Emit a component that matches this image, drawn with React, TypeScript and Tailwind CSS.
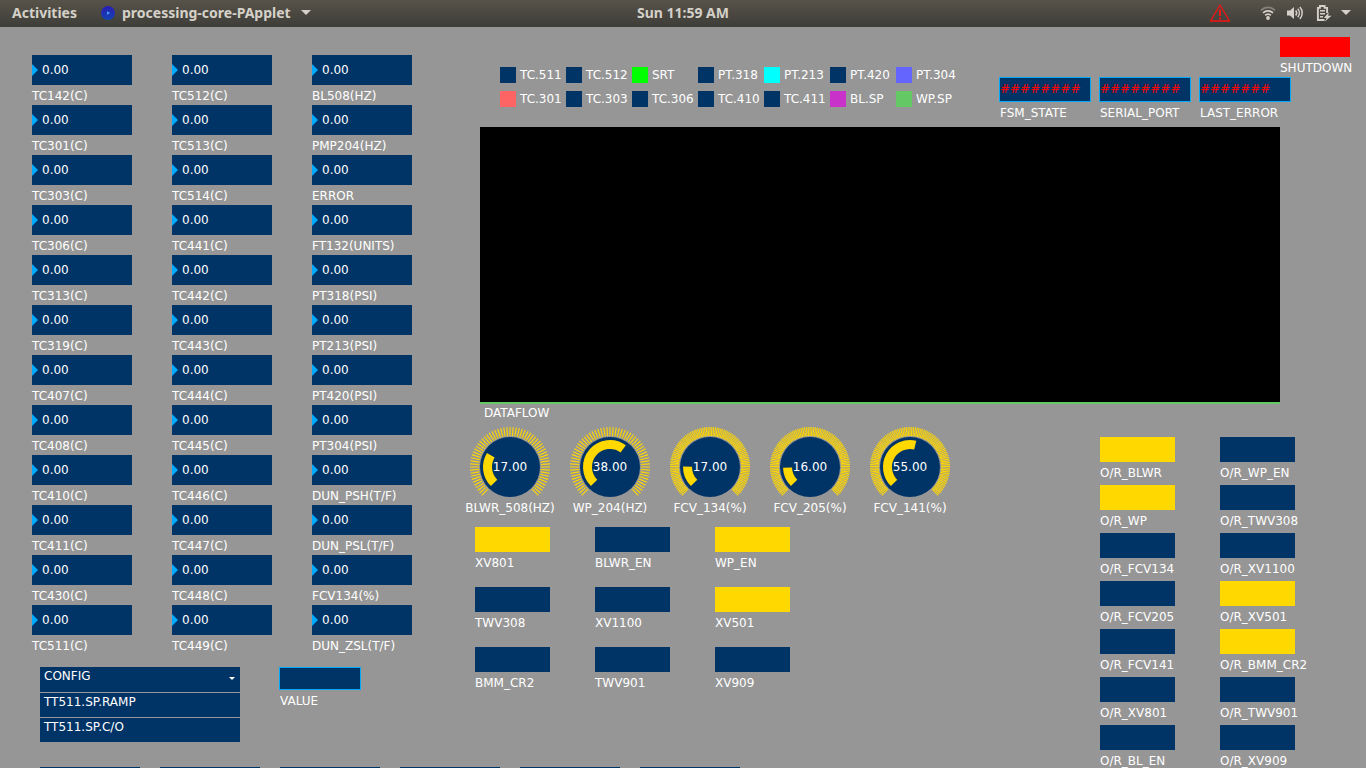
import React, { useId } from "react";

const sensorColumns: string[][] = [
  ["TC142(C)", "TC301(C)", "TC303(C)", "TC306(C)", "TC313(C)", "TC319(C)", "TC407(C)", "TC408(C)", "TC410(C)", "TC411(C)", "TC430(C)", "TC511(C)"],
  ["TC512(C)", "TC513(C)", "TC514(C)", "TC441(C)", "TC442(C)", "TC443(C)", "TC444(C)", "TC445(C)", "TC446(C)", "TC447(C)", "TC448(C)", "TC449(C)"],
  ["BL508(HZ)", "PMP204(HZ)", "ERROR", "FT132(UNITS)", "PT318(PSI)", "PT213(PSI)", "PT420(PSI)", "PT304(PSI)", "DUN_PSH(T/F)", "DUN_PSL(T/F)", "FCV134(%)", "DUN_ZSL(T/F)"],
];

const series: { name: string; color: string }[] = [
  { name: "TC.511", color: "bg-[#003366]" },
  { name: "TC.512", color: "bg-[#003366]" },
  { name: "SRT", color: "bg-[#00ff00]" },
  { name: "PT.318", color: "bg-[#003366]" },
  { name: "PT.213", color: "bg-[#00ffff]" },
  { name: "PT.420", color: "bg-[#003366]" },
  { name: "PT.304", color: "bg-[#6464ff]" },
  { name: "TC.301", color: "bg-[#ff6464]" },
  { name: "TC.303", color: "bg-[#003366]" },
  { name: "TC.306", color: "bg-[#003366]" },
  { name: "TC.410", color: "bg-[#003366]" },
  { name: "TC.411", color: "bg-[#003366]" },
  { name: "BL.SP", color: "bg-[#c832c8]" },
  { name: "WP.SP", color: "bg-[#64c864]" },
];

const statusFields = [
  { name: "FSM_STATE", value: "########" },
  { name: "SERIAL_PORT", value: "########" },
  { name: "LAST_ERROR", value: "#######" },
];

const knobs = [
  { name: "BLWR_508(HZ)", value: 17, max: 60 },
  { name: "WP_204(HZ)", value: 38, max: 60 },
  { name: "FCV_134(%)", value: 17, max: 100 },
  { name: "FCV_205(%)", value: 16, max: 100 },
  { name: "FCV_141(%)", value: 55, max: 100 },
];

type Switch = { name: string; on: boolean };

const outputs: Switch[] = [
  { name: "XV801", on: true },
  { name: "BLWR_EN", on: false },
  { name: "WP_EN", on: true },
  { name: "TWV308", on: false },
  { name: "XV1100", on: false },
  { name: "XV501", on: true },
  { name: "BMM_CR2", on: false },
  { name: "TWV901", on: false },
  { name: "XV909", on: false },
];

const overrides: Switch[] = [
  { name: "O/R_BLWR", on: true },
  { name: "O/R_WP_EN", on: false },
  { name: "O/R_WP", on: true },
  { name: "O/R_TWV308", on: false },
  { name: "O/R_FCV134", on: false },
  { name: "O/R_XV1100", on: false },
  { name: "O/R_FCV205", on: false },
  { name: "O/R_XV501", on: true },
  { name: "O/R_FCV141", on: false },
  { name: "O/R_BMM_CR2", on: true },
  { name: "O/R_XV801", on: false },
  { name: "O/R_TWV901", on: false },
  { name: "O/R_BL_EN", on: false },
  { name: "O/R_XV909", on: false },
];

function TopBar() {
  return (
    <header className="grid h-[27px] shrink-0 grid-cols-3 items-center bg-linear-to-b from-[#57534a] to-[#3e3d38] pb-0.5 font-['Noto_Sans',sans-serif] text-sm font-bold text-[#d5d1c8]">
      <div className="flex items-center pl-3">
        <button>Activities</button>
        <button className="ml-[23px] flex items-center">
          <svg className="mr-1.5" width="16" height="16" viewBox="0 0 16 16" aria-hidden="true">
            <defs>
              <linearGradient id="app-icon" x1="0" y1="0" x2="0" y2="1">
                <stop offset="0" stopColor="#2a1cb4" />
                <stop offset="1" stopColor="#1246b4" />
              </linearGradient>
            </defs>
            <circle cx="8" cy="8" r="7" fill="url(#app-icon)" />
            <path d="M7 6.2 10.2 8 7 9.8z" fill="#4aa0f0" />
          </svg>
          processing-core-PApplet
          <svg className="ml-2.5" width="10" height="5" viewBox="0 0 10 5" aria-hidden="true">
            <path d="M0 0h10L5 5z" fill="#d5d1c8" />
          </svg>
        </button>
      </div>
      <button className="justify-self-center">Sun 11:59 AM</button>
      <div className="flex items-center justify-end pr-[15px]">
        <button aria-label="Warning">
          <svg width="22" height="20" viewBox="0 0 22 20" fill="none" stroke="#f01414" aria-hidden="true">
            <path d="M11 2 1.5 18h19z" strokeWidth="1.3" strokeLinejoin="round" />
            <path d="M11 6.5v6.5" strokeWidth="2" />
            <path d="M11 14.5v2" strokeWidth="2" />
          </svg>
        </button>
        <button aria-label="Network" className="ml-[29px]">
          <svg width="16" height="16" viewBox="0 0 16 16" fill="none" strokeWidth="1.7" stroke="#d5d1c8" aria-hidden="true">
            <path d="M1 5.5a9.5 9.5 0 0 1 14 0" stroke="#85827a" />
            <path d="M3 8a6.8 6.8 0 0 1 10 0" />
            <path d="M5.2 10.4a3.8 3.8 0 0 1 5.6 0" />
            <circle cx="8" cy="13" r="1.9" fill="#d5d1c8" stroke="none" />
          </svg>
        </button>
        <button aria-label="Volume" className="ml-[11px]">
          <svg width="16" height="16" viewBox="0 0 16 16" fill="none" stroke="#d5d1c8" strokeWidth="1.5" aria-hidden="true">
            <path d="M0 5.5h3L7 2v12l-4-3.500H0z" fill="#d5d1c8" stroke="none" />
            <path d="M8.700 5.500a4 4 0 0 1 0 5" />
            <path d="M10.800 3.800a6.500 6.500 0 0 1 0 8.400" />
            <path d="M12.900 2a9 9 0 0 1 0 12" />
          </svg>
        </button>
        <button aria-label="Battery" className="ml-[13px]">
          <svg width="16" height="18" viewBox="0 0 16 18" fill="none" stroke="#d5d1c8" strokeWidth="1.900" aria-hidden="true">
            <path d="M8.500 16H1.900V3.900h2V2h4.700v1.900h2.500V9" />
            <path d="M4 6.800h5M4 9.800h5M4 12.800h3" strokeWidth="1.600" />
            <path d="m12.800 8.300-5 5.600h2.900L8.700 17.700l6.800-6h-3.300z" fill="#d5d1c8" stroke="none" />
          </svg>
        </button>
        <button aria-label="System menu" className="ml-[9px]">
          <svg width="10" height="5" viewBox="0 0 10 5" aria-hidden="true">
            <path d="M0 0h10L5 5z" fill="#d5d1c8" />
          </svg>
        </button>
      </div>
    </header>
  );
}

function NumberBox({ name }: { name: string }) {
  const id = useId();
  return (
    <div className="relative">
      <input id={id} defaultValue="0.00" className="block h-[30px] w-full bg-[#003366] pl-2.5 text-white outline-none" />
      <svg className="absolute left-0 top-[9px]" width="6" height="12" viewBox="0 0 6 12" aria-hidden="true">
        <path d="M0 0 6 6 0 12z" fill="#00aaff" />
      </svg>
      <label htmlFor={id} className="block h-5 leading-[22px]">{name}</label>
    </div>
  );
}

function Toggle({ name, on }: Switch) {
  const id = useId();
  return (
    <div>
      <button id={id} aria-pressed={on} className={on ? "block h-[25px] w-full bg-[#ffd800]" : "block h-[25px] w-full bg-[#003366]"} />
      <label htmlFor={id} className="block h-5 leading-[22px]">{name}</label>
    </div>
  );
}

function Knob({ name, value, max }: { name: string; value: number; max: number }) {
  const point = (radius: number, degrees: number) => {
    const a = (degrees * Math.PI) / 180;
    return `${(40 + radius * Math.cos(a)).toFixed(2)} ${(40 + radius * Math.sin(a)).toFixed(2)}`;
  };
  const sweep = (value / max) * 270;
  const ticks = Array.from({ length: max + 1 }, (_, i) => {
    const angle = 135 + (i * 270) / max;
    return `M${point(31, angle)}L${point(40, angle)}`;
  }).join("");
  return (
    <label className="relative flex w-[100px] flex-col items-center">
      <svg width="80" height="70" viewBox="0 0 80 70" aria-hidden="true">
        <path d={ticks} stroke="#ffd800" strokeWidth="1.1" />
        <circle cx="40" cy="40" r="30" fill="#003366" />
        <path
          d={`M${point(22.5, 135)}A22.5 22.5 0 ${sweep > 180 ? 1 : 0} 1 ${point(22.5, 135 + sweep)}`}
          fill="none"
          stroke="#ffd800"
          strokeWidth="9"
        />
        <text x="40" y="44" textAnchor="middle" fill="#fff" fontSize="12">{value.toFixed(2)}</text>
      </svg>
      <span className="h-5 leading-[22px]">{name}</span>
      <input type="range" min={0} max={max} defaultValue={value} className="absolute inset-0 size-full opacity-0" />
    </label>
  );
}

function ConfigMenu() {
  return (
    <div className="flex w-[200px] flex-col gap-px">
      <button aria-expanded="true" className="flex h-[25px] items-start justify-between bg-[#003366] pl-1 pr-[5px] text-left leading-[18px]">
        CONFIG
        <svg className="mt-2.5" width="6" height="3" viewBox="0 0 6 3" aria-hidden="true">
          <path d="M0 0h6L3 3z" fill="#fff" />
        </svg>
      </button>
      <button className="h-6 bg-[#003366] pb-1.5 pl-1 text-left leading-[18px]">TT511.SP.RAMP</button>
      <button className="h-6 bg-[#003366] pb-1.5 pl-1 text-left leading-[18px]">TT511.SP.C/O</button>
    </div>
  );
}

function SensorPanel() {
  return (
    <section className="w-[460px] shrink-0 pl-8 pt-7">
      <div className="flex gap-10">
        {sensorColumns.map((column) => (
          <div key={column[0]} className="w-[100px]">
            {column.map((name) => (
              <NumberBox key={name} name={name} />
            ))}
          </div>
        ))}
      </div>
      <div className="mt-3 flex items-start pl-2">
        <ConfigMenu />
        <div className="ml-[39px]">
          <input id="value" className="block h-[23px] w-[82px] border border-[#00aaff] bg-[#003366] px-0.5 outline-none" />
          <label htmlFor="value" className="block h-5 pl-px leading-[22px]">VALUE</label>
        </div>
      </div>
      <div className="mt-[25px] flex w-max gap-5 pl-2">
        {[1, 2, 3, 4, 5, 6].map((n) => (
          <button key={n} aria-label={`Command ${n}`} className="h-[25px] w-[100px] bg-[#003366]" />
        ))}
      </div>
    </section>
  );
}

function Legend() {
  return (
    <ul className="mt-[30px] grid grid-cols-[repeat(7,66px)] content-start gap-y-2 pl-10">
      {series.map((s) => (
        <li key={s.name} className="flex items-center gap-1 leading-4">
          <span className={`size-4 shrink-0 ${s.color}`} />
          {s.name}
        </li>
      ))}
    </ul>
  );
}

export default function App() {
  return (
    <div className="flex h-screen flex-col overflow-hidden bg-[#969696] font-['DejaVu_Sans',sans-serif] text-xs whitespace-nowrap text-white">
      <TopBar />
      <main className="flex min-h-0 flex-1">
        <SensorPanel />
        <div className="min-w-0 flex-1 pt-2.5">
          <div className="flex justify-between pr-4">
            <Legend />
            <div className="flex flex-col items-end">
              <div className="w-[70px]">
                <button id="shutdown" className="block h-5 w-full bg-[#ff0000]" />
                <label htmlFor="shutdown" className="block h-5 leading-[22px]">SHUTDOWN</label>
              </div>
              <div className="flex gap-2 pr-[59px]">
                {statusFields.map((f) => (
                  <div key={f.name} className="w-[92px]">
                    <input
                      id={f.name}
                      readOnly
                      value={f.value}
                      className="block h-[25px] w-full border border-[#00aaff] bg-[#003366] pb-0.5 text-[#ff0000] outline-none"
                    />
                    <label htmlFor={f.name} className="block h-5 pl-px leading-[22px]">{f.name}</label>
                  </div>
                ))}
              </div>
            </div>
          </div>
          <figure className="ml-5 mr-[86px] mt-[5px]">
            <div className="h-[277px] border-b-2 border-[#64c864] bg-black" />
            <figcaption className="pl-1 leading-[18px]">DATAFLOW</figcaption>
          </figure>
          <div className="flex justify-between pr-[71px]">
            <div className="pt-[5px]">
              <div className="flex">
                {knobs.map((k) => (
                  <Knob key={k.name} {...k} />
                ))}
              </div>
              <div className="mt-2.5 grid grid-cols-[repeat(3,75px)] gap-x-[45px] gap-y-[15px] pl-[15px]">
                {outputs.map((o) => (
                  <Toggle key={o.name} {...o} />
                ))}
              </div>
            </div>
            <div className="grid grid-cols-[repeat(2,75px)] content-start gap-x-[45px] gap-y-[3px] pt-[15px]">
              {overrides.map((o) => (
                <Toggle key={o.name} {...o} />
              ))}
            </div>
          </div>
        </div>
      </main>
    </div>
  );
}
